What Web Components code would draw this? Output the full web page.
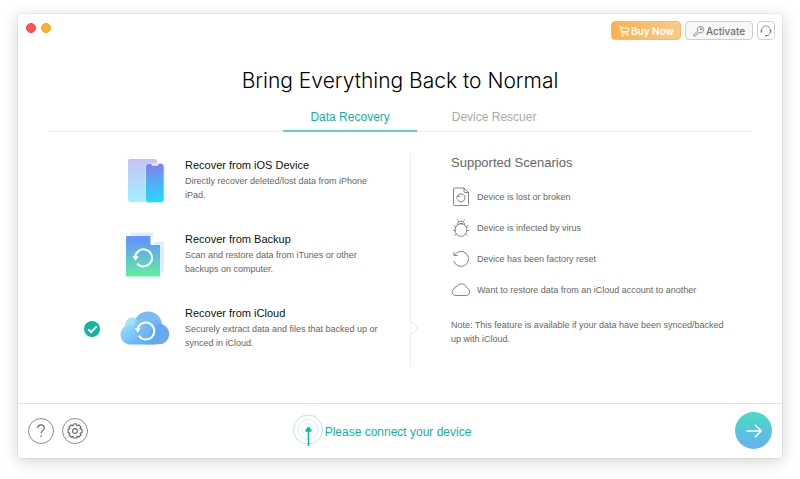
<!DOCTYPE html>
<html lang="en">
<head>
<meta charset="utf-8">
<meta name="viewport" content="width=device-width, initial-scale=1">
<title>Data Recovery</title>
<style>
  body {
    margin: 0;
    background: #fff;
    font-family: "Liberation Sans", Arial, sans-serif;
    color: #111;
    --accent: #12b5a0;
    --muted: #666;
    --line: #ececec;
  }
</style>
</head>
<body>
<app-window>
  <title-bar slot="bar"></title-bar>
  <span slot="heading">Bring Everything Back to Normal</span>
  <tab-list slot="tabs"></tab-list>
  <recovery-options slot="options"></recovery-options>
  <scenario-list slot="details">
    <span slot="heading">Supported Scenarios</span>
    <scenario-item>
      <svg slot="icon" width="18" height="20" viewBox="0 0 18 20" fill="none" stroke="#666" stroke-width=".8"><path d="M2.500 1H12l4.500 4.500V17.500a1 1 0 0 1-1 1H2.500a1 1 0 0 1-1-1V2a1 1 0 0 1 1-1zM12 1v3.500a1 1 0 0 0 1 1h3.500M5.300 9.300a4 4 0 1 1 0 3M4.600 11.500l.7-2.600 2.500 1"/></svg>
      Device is lost or broken
    </scenario-item>
    <scenario-item>
      <svg slot="icon" width="18" height="20" viewBox="0 0 18 20" fill="none" stroke="#666" stroke-width=".8"><ellipse cx="9" cy="12" rx="5.900" ry="6.300"/><path d="M5.300 7c0-2 1.500-3.800 3.700-3.800s3.700 1.800 3.700 3.800M6.600 3.600 5.500 1.500M11.400 3.600l1.100-2.100M3.900 9 1.900 7.400M3.100 12.500H1.200M4.300 16 2.500 17.800M14.100 9l2-1.600M14.900 12.500h1.900M13.700 16l1.800 1.800M8 5.700h3"/></svg>
      Device is infected by virus
    </scenario-item>
    <scenario-item>
      <svg slot="icon" width="18" height="20" viewBox="0 0 18 20" fill="none" stroke="#666" stroke-width=".8"><path d="M2.500 6.200A7.500 7.500 0 1 1 1.800 12M1.900 2.800v3.700h3.700"/></svg>
      Device has been factory reset
    </scenario-item>
    <scenario-item>
      <svg slot="icon" width="20" height="14" viewBox="0 0 20 14" fill="none" stroke="#666" stroke-width=".8"><path d="M5 12.500h10.200a3.700 3.700 0 0 0 2-6.700c-.9-.5-1.300-.6-1.600-1.600C15 2 12.600.8 10.600.9 8.300 1 6.600 2.100 6 3.500c-1.700-.1-2.700 1-2.900 2.500C.2 7.300.1 12 5 12.500z"/></svg>
      Want to restore data from an iCloud account to another
    </scenario-item>
    <span slot="note">Note: This feature is available if your data have been synced/backed up with iCloud.</span>
  </scenario-list>
  <status-bar slot="footer">Please connect your device</status-bar>
</app-window>

<script>
class AppWindow extends HTMLElement {
  constructor() {
    super();
    const template = document.createElement("template");
    template.innerHTML = `
<style>
  :host {
    box-sizing: border-box;
    display: flex;
    flex-direction: column;
    min-height: 100vh;
    padding: 14px 18px 21px;
  }
  .frame {
    flex: 1;
    display: flex;
    flex-direction: column;
    background: #fff;
    border-radius: 4px;
    box-shadow: 0 0 0 1px rgba(0, 0, 0, .04), 0 3px 16px rgba(0, 0, 0, .18);
  }
  main {
    flex: 1;
    padding: 0 30px;
  }
  h1 {
    margin: 25px 0 0;
    text-align: center;
    font: 300 21px/32px Inter, "Liberation Sans", sans-serif;
    color: #000;
  }
  .columns {
    display: grid;
    grid-template-columns: 363fr 341fr;
    align-items: start;
    margin-top: 21px;
  }
</style>
<div class="frame">
  <slot name="bar"></slot>
  <main>
    <h1><slot name="heading"></slot></h1>
    <slot name="tabs"></slot>
    <div class="columns">
      <slot name="options"></slot>
      <slot name="details"></slot>
    </div>
  </main>
  <slot name="footer"></slot>
</div>`;
    this.attachShadow({ mode: "open" }).appendChild(template.content.cloneNode(true));
  }
}

class TitleBar extends HTMLElement {
  constructor() {
    super();
    const template = document.createElement("template");
    template.innerHTML = `
<style>
  :host {
    display: flex;
    justify-content: space-between;
    padding: 7px 7px 0 8px;
  }
  .lights, .actions {
    display: flex;
  }
  .lights {
    gap: 5px;
    padding-top: 2px;
  }
  .actions {
    gap: 4px;
  }
  button {
    box-sizing: border-box;
    display: flex;
    align-items: center;
    justify-content: center;
    gap: 1px;
    height: 19px;
    padding: 0;
    border: 1px solid #cfcfcf;
    border-radius: 4px;
    background: #f8f8f8;
    color: #707070;
    font: 500 10px/14px Inter, sans-serif;
    white-space: nowrap;
    cursor: pointer;
  }
  .light {
    width: 10px;
    height: 10px;
    border: 1px solid #ee4840;
    border-radius: 50%;
    background: #fc5753;
  }
  .min {
    border-color: #f2a51f;
    background: #fdb528;
  }
  .buy {
    width: 70px;
    border-color: #fbba60;
    background: linear-gradient(90deg, #fdb14b, #fbcb8b);
    color: #fff;
    font-weight: 600;
  }
  .activate {
    width: 68px;
  }
  .support {
    width: 18px;
    background: #fff;
  }
  svg {
    flex: none;
  }
</style>
<div class="lights">
  <button class="light" aria-label="Close"></button>
  <button class="light min" aria-label="Minimize"></button>
</div>
<div class="actions">
  <button class="buy"><svg width="12" height="12" viewBox="0 0 12 12" fill="none" stroke="#fff"><path d="M.5 1h1.700l1.600 7h6.400M2.600 3h8.400l-.9 3.500H3.500"/><circle cx="4.600" cy="10.300" r=".8"/><circle cx="9.300" cy="10.300" r=".8"/></svg>Buy Now</button>
  <button class="activate"><svg width="12" height="12" viewBox="0 0 12 12" fill="none" stroke="#777" stroke-width=".8"><path d="M4.700 6.100a3.200 3.200 0 1 1 1.400 1.400l-1 .3-.5 1.100-1 .2-.6 1.300-.9.7-1.300-.1.100-1.500z"/><circle cx="8" cy="3.800" r=".9"/></svg>Activate</button>
  <button class="support" aria-label="Support"><svg width="12" height="12" viewBox="0 0 12 12" fill="none" stroke="#777" stroke-width=".8"><path d="M1.800 7V5.200a4.200 4.200 0 0 1 8.400 0V7c0 2-1.200 3.200-3.300 3.700"/><path d="M1.300 4.800v2.700M10.700 4.800v2.700M5 10.700h2" stroke-width="1.300"/></svg></button>
</div>`;
    this.attachShadow({ mode: "open" }).appendChild(template.content.cloneNode(true));
  }
}

class TabList extends HTMLElement {
  constructor() {
    super();
    const template = document.createElement("template");
    template.innerHTML = `
<style>
  :host {
    display: flex;
    gap: 10px;
    margin-top: 4px;
    padding-left: 33.4%;
    border-bottom: 1px solid var(--line);
  }
  button {
    width: 134px;
    height: 31px;
    margin-bottom: -1px;
    padding: 3px 0 0;
    border: 0;
    border-bottom: 2px solid transparent;
    background: none;
    color: #aaa;
    font: 12px/16px "Liberation Sans", Arial, sans-serif;
    cursor: pointer;
  }
  button[aria-selected="true"] {
    border-color: #63cdbf;
    color: var(--accent);
  }
</style>
<button role="tab" aria-selected="true">Data Recovery</button>
<button role="tab" aria-selected="false">Device Rescuer</button>`;
    this.attachShadow({ mode: "open" }).appendChild(template.content.cloneNode(true));
  }

  connectedCallback() {
    this.setAttribute("role", "tablist");
    const tabs = this.shadowRoot.querySelectorAll("button");
    tabs.forEach((tab) => {
      tab.addEventListener("click", () => {
        tabs.forEach((t) => t.setAttribute("aria-selected", String(t === tab)));
      });
    });
  }
}

// the radios share one root so that the browser groups them
class RecoveryOptions extends HTMLElement {
  constructor() {
    super();
    const template = document.createElement("template");
    template.innerHTML = `
<style>
  :host {
    display: flex;
    flex-direction: column;
    gap: 24px;
    padding: 1px 0 15px 36px;
    border-right: 1px solid var(--line);
  }
  label {
    position: relative;
    display: grid;
    grid-template-columns: 16px 52px 1fr;
    column-gap: 19px;
    align-items: center;
    cursor: pointer;
  }
  input {
    appearance: none;
    width: 16px;
    height: 16px;
    margin: 4px 0 0;
    border-radius: 50%;
  }
  input:checked {
    display: grid;
    place-items: center;
    background: var(--accent);
  }
  input:checked::before {
    content: "";
    width: 7px;
    height: 3px;
    margin-bottom: 2px;
    border: solid #fff;
    border-width: 0 0 2px 2px;
    transform: rotate(-45deg);
  }
  .arrow {
    display: none;
    position: absolute;
    right: -9px;
    top: 18px;
  }
  input:checked ~ .arrow {
    display: block;
  }
  .icon {
    display: block;
    margin-top: 4px;
  }
  .text {
    display: flex;
    flex-direction: column;
    margin-left: -5px;
    padding-right: 20px;
    font-size: 9px;
    line-height: 14px;
    color: var(--muted);
  }
  strong {
    font-weight: 400;
    font-size: 11px;
    line-height: 18px;
    color: #111;
  }
</style>
<label>
  <input type="radio" name="source">
  <svg class="icon" width="52" height="46" viewBox="0 0 52 46">
    <defs>
      <linearGradient id="pad" x2="0" y2="1"><stop stop-color="#c5c3f7"/><stop offset="1" stop-color="#a3f0fc"/></linearGradient>
      <linearGradient id="phone" x2="0" y2="1"><stop stop-color="#827ee9"/><stop offset="1" stop-color="#22dcff"/></linearGradient>
    </defs>
    <rect x="9" y="1" width="29" height="43" rx="2" fill="url(#pad)"/>
    <rect x="26.500" y="5.500" width="18.500" height="39" rx="3" fill="url(#phone)" stroke="#c1e5ff"/>
    <path d="M32 5.500h8l-1 2.200h-6z" fill="#e8e8ff"/>
  </svg>
  <span class="text"><strong>Recover from iOS Device</strong><span>Directly recover deleted/lost data from iPhone<br>iPad.</span></span>
</label>
<label>
  <input type="radio" name="source">
  <svg class="icon" width="52" height="46" viewBox="0 0 52 46">
    <defs><linearGradient id="doc" x2="0" y2="1"><stop offset=".1" stop-color="#6397fd"/><stop offset="1" stop-color="#5ff09c"/></linearGradient></defs>
    <path d="M12 3V1.500a1 1 0 0 1 1-1h21v4.500zM35 10h10v29a1 1 0 0 1-1 1H35z" fill="#e3ecff"/>
    <path d="M8 4h23.500v8a1 1 0 0 0 1 1h8.500v30.500a1 1 0 0 1-1 1H8a1 1 0 0 1-1-1V5a1 1 0 0 1 1-1z" fill="url(#doc)"/>
    <path d="M16 25.500a8.500 8.500 0 1 1 2.100 6" fill="none" stroke="#fff" stroke-width="2"/>
    <path d="M13.400 24.200h6.300l-3.200 4.500z" fill="#fff"/>
  </svg>
  <span class="text"><strong>Recover from Backup</strong><span>Scan and restore data from iTunes or other<br>backups on computer.</span></span>
</label>
<label>
  <input type="radio" name="source" checked>
  <svg class="icon" width="52" height="46" viewBox="0 0 52 46">
    <defs>
      <linearGradient id="base" x2="1" y2="1"><stop stop-color="#83c8fa"/><stop offset="1" stop-color="#52a2f7"/></linearGradient>
      <linearGradient id="left" x2="1" y2="1"><stop stop-color="#9fe4fb"/><stop offset="1" stop-color="#4aa2f8"/></linearGradient>
    </defs>
    <circle cx="29" cy="19.500" r="14" fill="#7db9f5"/>
    <circle cx="13.500" cy="19" r="7.500" fill="#8fd9fa" opacity=".8"/>
    <path d="M33 20a10 10 0 0 1 7-2.300 10.300 10.300 0 0 1 0 20.600H27z" fill="#5c9fed" opacity=".9"/>
    <path d="M10 18.500c6-.7 10 3 11.500 8l15 12H10a10 10 0 0 1 0-19.800z" fill="url(#left)"/>
    <circle cx="29" cy="24.500" r="13.800" fill="url(#base)" opacity=".65"/>
    <path d="M18.500 23a8.500 8.500 0 1 1 1.300 6.800" fill="none" stroke="#fff" stroke-width="2"/>
    <path d="M15.600 22.200h6.300l-3.200 4.500z" fill="#fff"/>
  </svg>
  <span class="text"><strong>Recover from iCloud</strong><span>Securely extract data and files that backed up or<br>synced in iCloud.</span></span>
  <svg class="arrow" width="9" height="16" viewBox="0 0 9 16"><path d="M.5.500 8 8 .5 15.500" fill="#fff" stroke="#e6e6e6"/></svg>
</label>`;
    this.attachShadow({ mode: "open" }).appendChild(template.content.cloneNode(true));
  }
}

class ScenarioList extends HTMLElement {
  constructor() {
    super();
    const template = document.createElement("template");
    template.innerHTML = `
<style>
  :host {
    display: block;
    padding: 0 20px 0 40px;
    font-size: 9px;
    line-height: 14px;
    color: var(--muted);
  }
  h2 {
    margin: 0 0 8px;
    font-weight: 400;
    font-size: 13px;
    line-height: 20px;
  }
  p {
    margin: 13px 0 0;
  }
</style>
<h2><slot name="heading"></slot></h2>
<div role="list"><slot></slot></div>
<p><slot name="note"></slot></p>`;
    this.attachShadow({ mode: "open" }).appendChild(template.content.cloneNode(true));
  }
}

class ScenarioItem extends HTMLElement {
  constructor() {
    super();
    const template = document.createElement("template");
    template.innerHTML = `
<style>
  :host {
    display: flex;
    align-items: center;
    gap: 6px;
    min-height: 31px;
  }
  .icon {
    display: flex;
    justify-content: center;
    flex: none;
    width: 20px;
  }
</style>
<span class="icon"><slot name="icon"></slot></span>
<span><slot></slot></span>`;
    this.attachShadow({ mode: "open" }).appendChild(template.content.cloneNode(true));
  }

  connectedCallback() {
    this.setAttribute("role", "listitem");
  }
}

class StatusBar extends HTMLElement {
  constructor() {
    super();
    const template = document.createElement("template");
    template.innerHTML = `
<style>
  :host {
    display: grid;
    grid-template-columns: 265fr 443fr auto;
    align-items: center;
    padding: 8px 10px 9px;
    border-top: 1px solid #e4e4e4;
  }
  .tools, .message {
    display: flex;
    align-items: center;
  }
  .tools {
    gap: 8px;
  }
  .message {
    gap: 2px;
    font-size: 12px;
    line-height: 16px;
    color: var(--accent);
  }
  .message span {
    padding-top: 3px;
  }
  button {
    display: grid;
    place-items: center;
    box-sizing: border-box;
    width: 26px;
    height: 26px;
    padding: 0;
    border: 1px solid #8c8c8c;
    border-radius: 50%;
    background: #fff;
    cursor: pointer;
  }
  .next {
    width: 37px;
    height: 37px;
    border: 0;
    background: linear-gradient(#4ed6c6 15%, #67aff3);
  }
</style>
<div class="tools">
  <button aria-label="Help"><svg width="16" height="16" viewBox="0 0 16 16" fill="none" stroke="#666" stroke-width="1.200"><path d="M4.700 5.300c0-2.200 1.400-3.400 3.300-3.400s3.300 1.200 3.300 3c0 2.300-3.200 2.800-3.200 5.600M8.100 12.500v1.500"/></svg></button>
  <button aria-label="Settings"><svg width="16" height="16" viewBox="0 0 16 16" fill="none" stroke="#666" stroke-width="1.100"><path d="M6.500 1h3l.6 1.700 1.800-.7 2.100 2.100-.8 1.700 1.800.7v3l-1.800.7.800 1.700-2.100 2.100-1.700-.8-.7 1.800h-3l-.7-1.800-1.700.8L2 11.900l.8-1.700L1 9.500v-3l1.800-.7L2 4.100 4.100 2l1.800.7z"/><circle cx="8" cy="8" r="2.400"/></svg></button>
</div>
<div class="message">
  <svg width="30" height="34" viewBox="0 0 30 34" fill="none"><g stroke="#12b5a0"><circle cx="15" cy="15.500" r="14.500" opacity=".3"/><circle cx="15" cy="15.500" r="10" opacity=".18"/><circle cx="15" cy="15.500" r="6" opacity=".12"/></g><path d="M15.500 15v17" stroke="#12b5a0" stroke-width="1.500"/><path d="M12.500 16.500h6M13.700 14.500h3.600" stroke="#12b5a0" stroke-width="2.400"/></svg>
  <span role="status"><slot></slot></span>
</div>
<button class="next" aria-label="Next"><svg width="18" height="16" viewBox="0 0 18 16" fill="none" stroke="#fff" stroke-width="1.600"><path d="M1.500 8h14.500M9.800 1.700 16.100 8l-6.300 6.300"/></svg></button>`;
    this.attachShadow({ mode: "open" }).appendChild(template.content.cloneNode(true));
  }
}

window.customElements.define("app-window", AppWindow);
window.customElements.define("title-bar", TitleBar);
window.customElements.define("tab-list", TabList);
window.customElements.define("recovery-options", RecoveryOptions);
window.customElements.define("scenario-list", ScenarioList);
window.customElements.define("scenario-item", ScenarioItem);
window.customElements.define("status-bar", StatusBar);
</script>
</body>
</html>
